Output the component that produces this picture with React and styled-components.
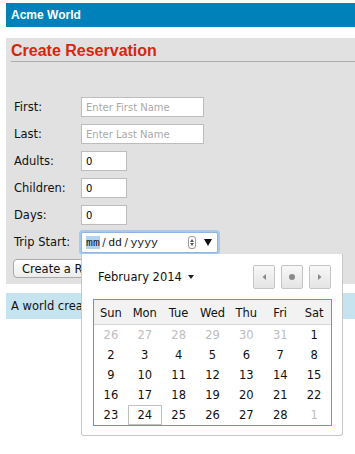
import React from "react";
import styled, { createGlobalStyle } from "styled-components";

const GlobalStyle = createGlobalStyle`
  html {
    overflow: hidden;
  }
  html, body {
    margin: 0;
    padding: 0;
    background: #ffffff;
  }
  body {
    font-family: "DejaVu Sans", "Liberation Sans", sans-serif;
  }
`;

const Page = styled.div`
  padding: 3px 0 0 6px;
  width: 349px;
  height: 451px;
`;

const TopBar = styled.div`
  height: 24px;
  background: #0081b9;
  display: flex;
  align-items: center;
  padding-left: 5px;
`;

const Brand = styled.span`
  font-family: "Liberation Sans", Arial, sans-serif;
  font-weight: bold;
  font-size: 12px;
  color: #ffffff;
`;

const Panel = styled.div`
  margin-top: 11px;
  background: #e1e1e1;
  padding: 4px 0 6px 0;
`;

const Title = styled.h1`
  margin: 0 0 0 5px;
  font-family: "Liberation Sans", Arial, sans-serif;
  font-size: 16px;
  line-height: 18px;
  font-weight: bold;
  color: #d8260e;
  padding-bottom: 1px;
  border-bottom: 1px solid #acacac;
`;

const Form = styled.div`
  margin-top: 35px;
  padding-left: 8px;
  display: flex;
  flex-direction: column;
  gap: 7px;
`;

const Row = styled.div`
  display: flex;
  align-items: center;
  height: 20px;
`;

const Label = styled.span`
  width: 67px;
  font-size: 11.5px;
  color: #111;
`;

const TextInput = styled.div`
  box-sizing: border-box;
  width: ${(p) => (p.$wide ? "123px" : "46px")};
  height: 20px;
  background: #fff;
  border: 1px solid #bdbdbd;
  padding-left: 4px;
  display: flex;
  align-items: center;
  font-size: 10px;
  color: ${(p) => (p.$placeholder ? "#a9a9a9" : "#000")};
`;

const DateWrap = styled.div`
  position: relative;
  width: 137px;
  height: 21px;
`;

const DateField = styled.div`
  box-sizing: border-box;
  width: 100%;
  height: 100%;
  background: #fff;
  border: 1px solid #8fb6e0;
  box-shadow: 0 0 0 2px #a8c9ec;
  border-radius: 2px;
  display: flex;
  align-items: center;
  padding-left: 4px;
  font-family: "Liberation Mono", "Courier New", monospace;
  font-size: 11.5px;
  color: #111;
`;

const Seg = styled.span`
  background: ${(p) => (p.$active ? "#b4d3f4" : "transparent")};
`;

const Slash = styled.span`
  margin: 0 2.5px;
  font-family: "DejaVu Sans", sans-serif;
  font-size: 10px;
`;

const Spinner = styled.span`
  margin-left: auto;
  width: 6px;
  height: 11px;
  border: 1px solid #9a9a9a;
  border-radius: 3px;
  display: flex;
  flex-direction: column;
  align-items: center;
  justify-content: center;
  gap: 1px;
`;

const Caret = styled.span`
  width: 0;
  height: 0;
  border-left: 2px solid transparent;
  border-right: 2px solid transparent;
  ${(p) =>
    p.$up
      ? "border-bottom: 3px solid #555;"
      : "border-top: 3px solid #555;"}
`;

const DropArrow = styled.span`
  margin: 0 5px 0 8px;
  width: 0;
  height: 0;
  border-left: 4px solid transparent;
  border-right: 4px solid transparent;
  border-top: 7px solid #111;
`;

const Popup = styled.div`
  position: absolute;
  left: 0;
  top: 22px;
  width: 262px;
  height: 182px;
  box-sizing: border-box;
  background: #fff;
  border: 1px solid #c6c6c6;
  border-top: none;
  border-radius: 0 0 3px 3px;
  padding: 11px 11px 0 11px;
  z-index: 5;
`;

const PopupHead = styled.div`
  display: flex;
  align-items: center;
  justify-content: space-between;
  height: 24px;
  margin-bottom: 10px;
`;

const MonthSelect = styled.div`
  display: flex;
  align-items: center;
  padding-left: 5px;
  font-size: 11.5px;
  color: #111;
`;

const SmallArrow = styled.span`
  margin-left: 6px;
  width: 0;
  height: 0;
  border-left: 3px solid transparent;
  border-right: 3px solid transparent;
  border-top: 4px solid #222;
`;

const NavGroup = styled.div`
  display: flex;
  gap: 6px;
`;

const NavButton = styled.div`
  box-sizing: border-box;
  width: 22px;
  height: 24px;
  border: 1px solid #c4c4c4;
  border-radius: 2px;
  background: linear-gradient(#f8f8f8, #e4e4e4);
  display: flex;
  align-items: center;
  justify-content: center;
`;

const Grid = styled.div`
  box-sizing: border-box;
  width: 239px;
  border: 1px solid #4a9cf0;
  display: grid;
  grid-template-columns: repeat(7, 1fr);
`;

const HeadCell = styled.div`
  box-sizing: border-box;
  height: 25px;
  padding-top: 3px;
  background: #f2f2f2;
  border-bottom: 1px solid #d6d6d6;
  display: flex;
  align-items: center;
  justify-content: center;
  font-size: 11.5px;
  color: #111;
`;

const DayCell = styled.div`
  box-sizing: border-box;
  height: 20px;
  display: flex;
  align-items: center;
  justify-content: center;
  font-size: 11.5px;
  color: ${(p) => (p.$muted ? "#bdbdbd" : "#111")};
  border: 1px solid ${(p) => (p.$today ? "#c2c2c2" : "transparent")};
`;

const SubmitButton = styled.div`
  box-sizing: border-box;
  margin-left: -1px;
  width: 150px;
  height: 19px;
  border: 1px solid #a9a9a9;
  border-radius: 4px;
  background: linear-gradient(#ffffff, #ececec);
  display: flex;
  align-items: center;
  padding-left: 8px;
  font-size: 11.5px;
  color: #111;
  white-space: nowrap;
`;

const Footer = styled.div`
  margin-top: 9px;
  height: 26px;
  background: #c6e3f0;
  display: flex;
  align-items: center;
  padding-left: 5px;
  font-size: 11.5px;
  color: #111;
`;

const days = ["Sun", "Mon", "Tue", "Wed", "Thu", "Fri", "Sat"];

const buildCells = () => {
  const cells = [];
  [26, 27, 28, 29, 30, 31].forEach((d) => cells.push({ d, muted: true }));
  for (let d = 1; d <= 28; d++) cells.push({ d, today: d === 24 });
  cells.push({ d: 1, muted: true });
  return cells;
};

const Calendar = () => (
  <Popup>
    <PopupHead>
      <MonthSelect>
        February 2014
        <SmallArrow />
      </MonthSelect>
      <NavGroup>
        <NavButton>
          <svg width="6" height="8" viewBox="0 0 6 8">
            <path d="M5 1 L1.5 4 L5 7 Z" fill="#8a8a8a" />
          </svg>
        </NavButton>
        <NavButton>
          <svg width="8" height="8" viewBox="0 0 8 8">
            <circle cx="4" cy="4" r="3" fill="#8a8a8a" />
          </svg>
        </NavButton>
        <NavButton>
          <svg width="6" height="8" viewBox="0 0 6 8">
            <path d="M1 1 L4.5 4 L1 7 Z" fill="#8a8a8a" />
          </svg>
        </NavButton>
      </NavGroup>
    </PopupHead>
    <Grid>
      {days.map((d) => (
        <HeadCell key={d}>{d}</HeadCell>
      ))}
      {buildCells().map((c, i) => (
        <DayCell key={i} $muted={c.muted} $today={c.today}>
          {c.d}
        </DayCell>
      ))}
    </Grid>
  </Popup>
);

export default function App() {
  return (
    <>
      <GlobalStyle />
      <Page>
        <TopBar>
          <Brand>Acme World</Brand>
        </TopBar>
        <Panel>
          <Title>Create Reservation</Title>
          <Form>
            <Row>
              <Label>First:</Label>
              <TextInput $wide $placeholder>Enter First Name</TextInput>
            </Row>
            <Row>
              <Label>Last:</Label>
              <TextInput $wide $placeholder>Enter Last Name</TextInput>
            </Row>
            <Row>
              <Label>Adults:</Label>
              <TextInput>0</TextInput>
            </Row>
            <Row>
              <Label>Children:</Label>
              <TextInput>0</TextInput>
            </Row>
            <Row>
              <Label>Days:</Label>
              <TextInput>0</TextInput>
            </Row>
            <Row>
              <Label>Trip Start:</Label>
              <DateWrap>
                <DateField>
                  <Seg $active>mm</Seg>
                  <Slash>/</Slash>
                  <Seg>dd</Seg>
                  <Slash>/</Slash>
                  <Seg>yyyy</Seg>
                  <Spinner>
                    <Caret $up />
                    <Caret />
                  </Spinner>
                  <DropArrow />
                </DateField>
                <Calendar />
              </DateWrap>
            </Row>
            <SubmitButton>Create a Reservation</SubmitButton>
          </Form>
        </Panel>
        <Footer>A world created just for you.</Footer>
      </Page>
    </>
  );
}
